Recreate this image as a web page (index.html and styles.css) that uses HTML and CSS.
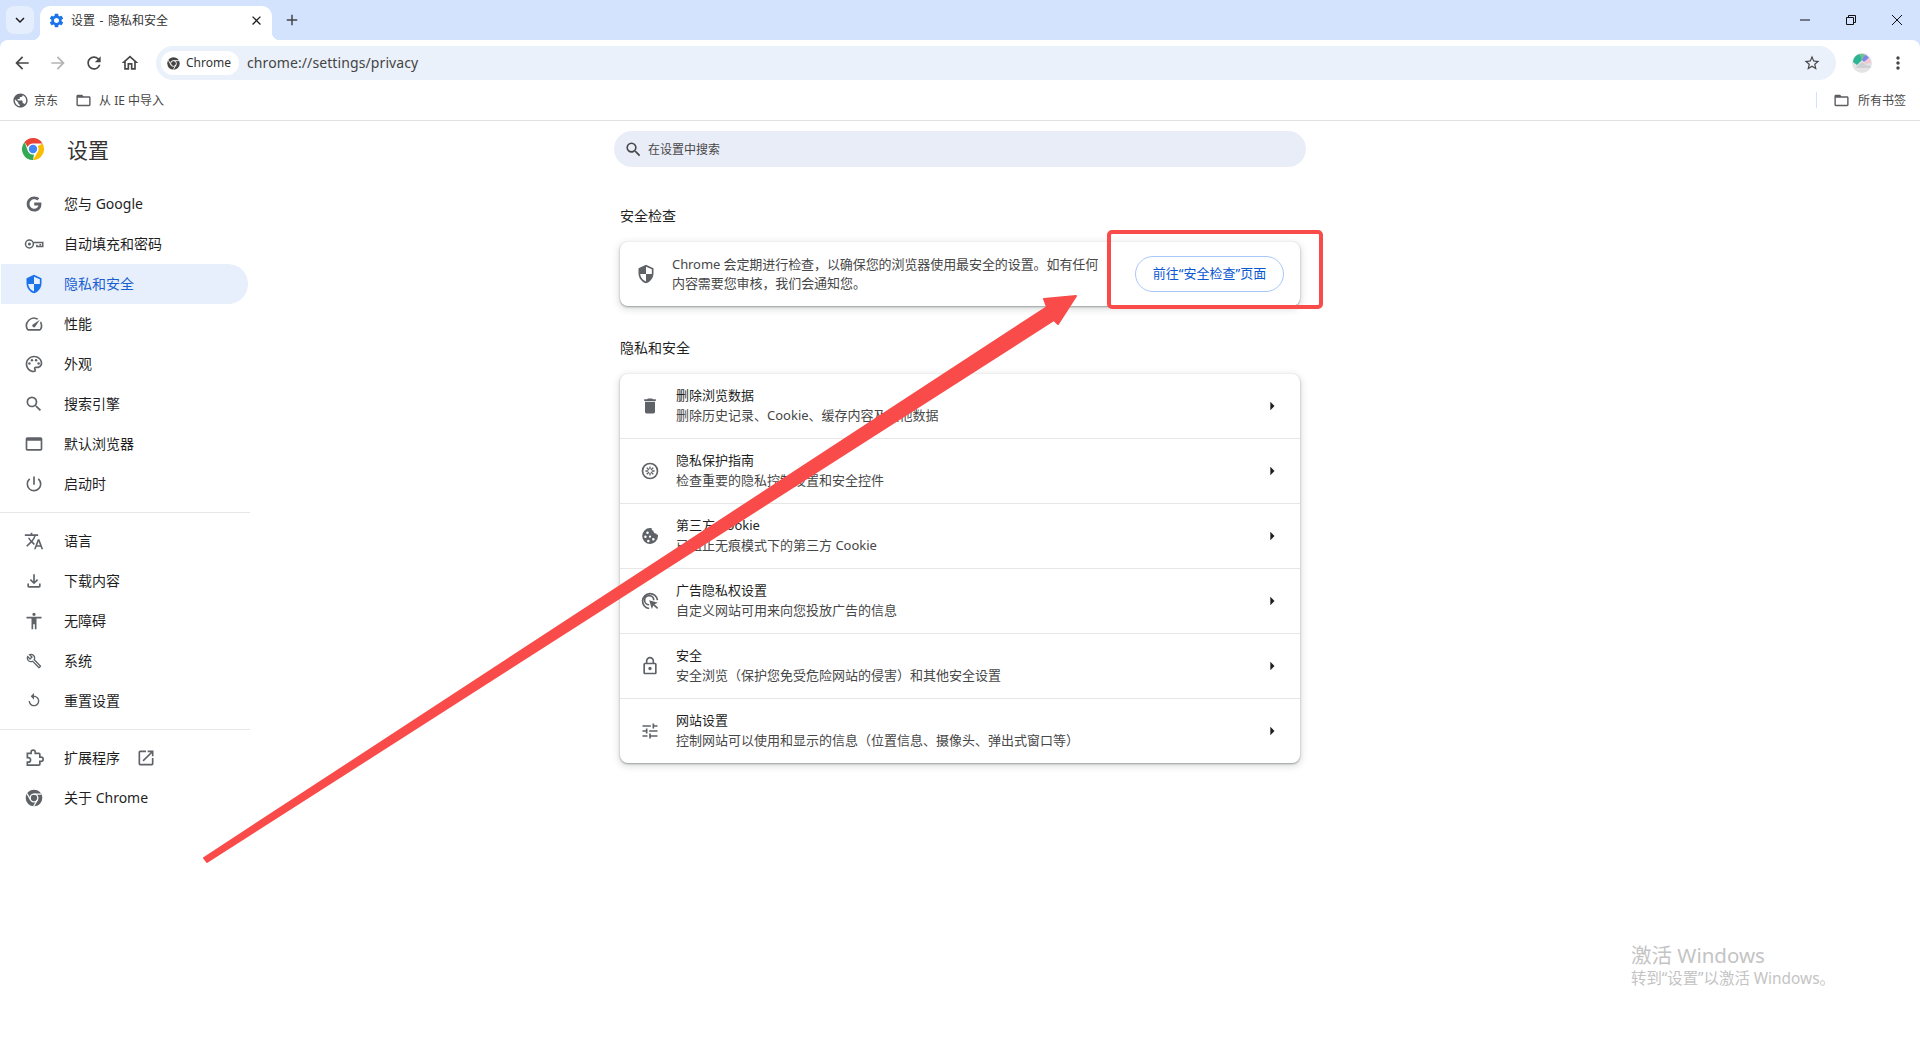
FILE: index.html
```html
<!DOCTYPE html>
<html lang="zh-CN">
<head>
  <meta charset="UTF-8" />
  <title>设置 - 隐私和安全</title>
  <link rel="stylesheet" href="styles.css">
</head>
<body>
  <div class="browser-top">
    <div class="tab-strip">
      <button class="tab-search">
        <svg class="icon-sm" viewBox="0 0 24 24"><path d="M7.4 8.6 12 13.2l4.6-4.6L18 10l-6 6-6-6z"/></svg>
      </button>
      <div class="tab">
        <svg class="tab-icon" viewBox="0 0 24 24"><path d="M19.14 12.94c.04-.3.06-.61.06-.94 0-.32-.02-.64-.07-.94l2.03-1.58c.18-.14.23-.41.12-.61l-1.92-3.32c-.12-.22-.37-.29-.59-.22l-2.39.96c-.5-.38-1.03-.7-1.62-.94l-.36-2.54c-.04-.24-.24-.41-.48-.41h-3.84c-.24 0-.43.17-.47.41l-.36 2.54c-.59.24-1.13.57-1.62.94l-2.39-.96c-.22-.08-.47 0-.59.22L2.74 8.87c-.12.21-.08.47.12.61l2.03 1.58c-.05.3-.09.63-.09.94s.02.64.07.94l-2.03 1.58c-.18.14-.23.41-.12.61l1.92 3.32c.12.22.37.29.59.22l2.39-.96c.5.38 1.03.7 1.62.94l.36 2.54c.05.24.24.41.48.41h3.84c.24 0 .44-.17.47-.41l.36-2.54c.59-.24 1.13-.56 1.62-.94l2.39.96c.22.08.47 0 .59-.22l1.92-3.32c.12-.22.07-.47-.12-.61l-2.01-1.58zM12 15.6c-1.98 0-3.6-1.62-3.6-3.6s1.62-3.6 3.6-3.6 3.6 1.62 3.6 3.6-1.62 3.6-3.6 3.6z"/></svg>
        <span class="tab-title">设置 - 隐私和安全</span>
        <svg class="tab-close" viewBox="0 0 24 24"><path d="M19 6.41 17.59 5 12 10.59 6.41 5 5 6.41 10.59 12 5 17.59 6.41 19 12 13.41 17.59 19 19 17.59 13.41 12z"/></svg>
      </div>
      <svg class="new-tab" viewBox="0 0 24 24"><path d="M19 13h-6v6h-2v-6H5v-2h6V5h2v6h6z"/></svg>
      <div class="window-controls">
        <svg viewBox="0 0 12 12"><path d="M1 6h10"/></svg>
        <svg viewBox="0 0 12 12"><path d="M1.5 3.5h7v7h-7zM3.5 3.5v-2h7v7h-2"/></svg>
        <svg viewBox="0 0 12 12"><path d="M1 1l10 10M11 1 1 11"/></svg>
      </div>
    </div>

    <div class="toolbar">
      <svg class="tool-icon" viewBox="0 0 24 24"><path d="M20 11H7.83l5.59-5.59L12 4l-8 8 8 8 1.41-1.41L7.83 13H20v-2z"/></svg>
      <svg class="tool-icon disabled" viewBox="0 0 24 24"><path d="M12 4l-1.41 1.41L16.17 11H4v2h12.17l-5.58 5.59L12 20l8-8z"/></svg>
      <svg class="tool-icon" viewBox="0 0 24 24"><path d="M17.65 6.35A7.958 7.958 0 0 0 12 4c-4.42 0-7.99 3.58-7.99 8s3.57 8 7.99 8c3.73 0 6.84-2.55 7.73-6h-2.08A5.99 5.99 0 0 1 12 18c-3.31 0-6-2.69-6-6s2.69-6 6-6c1.66 0 3.14.69 4.22 1.78L13 11h7V4l-2.35 2.35z"/></svg>
      <svg class="tool-icon" viewBox="0 0 24 24"><path d="M12 5.69l5 4.5V18h-2v-6H9v6H7v-7.81l5-4.5M12 3L2 12h3v8h6v-6h2v6h6v-8h3L12 3z"/></svg>
      <div class="omnibox">
        <div class="chip">
          <svg class="chrome-mono" viewBox="0 0 24 24"><circle cx="12" cy="12" r="10"/><circle class="hole" cx="12" cy="12" r="4.6"/><path class="cut" d="M12 7.4h9M8 14.3 3.6 6.7M16 14.3l-4.4 7.6"/></svg>
          <span>Chrome</span>
        </div>
        <span class="url">chrome://settings/privacy</span>
        <svg class="star" viewBox="0 0 24 24"><path d="M22 9.24l-7.19-.62L12 2 9.19 8.63 2 9.24l5.46 4.73L5.82 21 12 17.27 18.18 21l-1.63-7.03L22 9.24zM12 15.4l-3.76 2.27 1-4.28-3.32-2.88 4.38-.38L12 6.1l1.71 4.04 4.38.38-3.32 2.88 1 4.28L12 15.4z"/></svg>
      </div>
      <svg class="avatar" viewBox="0 0 20 20">
        <circle cx="10" cy="10" r="10" fill="#e4e4e4"/>
        <path d="M1 9A9 9 0 0 1 8 1l2 6-5 5z" fill="#2bb594"/>
        <path d="M8 1a9 9 0 0 1 5 .6L10 8z" fill="#72c08e"/>
        <path d="M13 1.5A9 9 0 0 1 17 5l-5 4-2-2z" fill="#7a86e8"/>
        <path d="M17 5a9 9 0 0 1 2 5l-6 1-1-2z" fill="#f0c7d2"/>
        <path d="M4 14l6-5 4 3 5 1a9 9 0 0 1-1 2H5z" fill="#cfd0d6"/>
      </svg>
      <svg class="tool-icon menu" viewBox="0 0 24 24"><path d="M12 8c1.1 0 2-.9 2-2s-.9-2-2-2-2 .9-2 2 .9 2 2 2zm0 2c-1.1 0-2 .9-2 2s.9 2 2 2 2-.9 2-2-.9-2-2-2zm0 6c-1.1 0-2 .9-2 2s.9 2 2 2 2-.9 2-2-.9-2-2-2z"/></svg>
    </div>
  </div>

  <div class="bookmarks">
    <div class="bookmark site">
      <svg viewBox="0 0 24 24"><path d="M12 2C6.48 2 2 6.48 2 12s4.48 10 10 10 10-4.48 10-10S17.52 2 12 2zm-1 17.93c-3.95-.49-7-3.85-7-7.93 0-.62.08-1.21.21-1.79L9 15v1c0 1.1.9 2 2 2v1.93zm6.9-2.54c-.26-.81-1-1.39-1.9-1.39h-1v-3c0-.55-.45-1-1-1H8v-2h2c.55 0 1-.45 1-1V7h2c1.1 0 2-.9 2-2v-.41c2.93 1.19 5 4.06 5 7.41 0 2.08-.8 3.97-2.1 5.39z"/></svg>
      <span>京东</span>
    </div>
    <div class="bookmark">
      <svg viewBox="0 0 24 24"><path d="M20 6h-8l-2-2H4c-1.1 0-1.99.9-1.99 2L2 18c0 1.1.9 2 2 2h16c1.1 0 2-.9 2-2V8c0-1.1-.9-2-2-2zm0 12H4V8h16v10z"/></svg>
      <span>从 IE 中导入</span>
    </div>
    <div class="bookmarks-end">
      <div class="bookmark-sep"></div>
      <div class="bookmark">
        <svg viewBox="0 0 24 24"><path d="M20 6h-8l-2-2H4c-1.1 0-1.99.9-1.99 2L2 18c0 1.1.9 2 2 2h16c1.1 0 2-.9 2-2V8c0-1.1-.9-2-2-2zm0 12H4V8h16v10z"/></svg>
        <span>所有书签</span>
      </div>
    </div>
  </div>

  <div class="settings">
    <aside class="sidebar">
      <div class="brand">
        <svg class="brand-logo" viewBox="0 0 24 24">
          <path d="M12 1a11 11 0 0 1 9.53 5.5H12a5.5 5.5 0 0 0-5.2 3.7L3.6 4.9A11 11 0 0 1 12 1z" fill="#ea4335"/>
          <path d="M21.53 6.5A11 11 0 0 1 12 23l4.76-8.25A5.5 5.5 0 0 0 16.76 9.25z" fill="#fbbc04"/>
          <path d="M12 23A11 11 0 0 1 3.6 4.9L7.2 14.75a5.5 5.5 0 0 0 5.8 2.7z" fill="#34a853"/>
          <circle cx="12" cy="12" r="5.2" fill="#fff"/>
          <circle cx="12" cy="12" r="4.2" fill="#4285f4"/>
        </svg>
        <span class="brand-name">设置</span>
      </div>

      <nav class="nav-group">
        <a class="nav-item"><svg class="nav-icon" viewBox="0 0 24 24"><path d="M12.24 10.29v3.6h5.1c-.45 2.2-2.35 3.8-5.1 3.8-3.07 0-5.57-2.54-5.57-5.69s2.5-5.69 5.57-5.69c1.55 0 2.75.6 3.59 1.39l2.6-2.6C16.7 3.87 14.67 3 12.24 3 7.27 3 3.24 7.03 3.24 12s4.03 9 9 9c5.2 0 8.64-3.65 8.64-8.8 0-.59-.06-1.34-.14-1.91z"/></svg>您与 Google</a>
        <a class="nav-item"><svg class="nav-icon" viewBox="0 0 24 24"><circle class="key" cx="6.500" cy="12" r="4.700"/><circle cx="6.500" cy="12" r="1.800"/><path class="key" d="M11.200 10.200h11.300v4.800h-7v-2"/><path d="M18.500 12h2v2h-2z"/></svg>自动填充和密码</a>
        <a class="nav-item active"><svg class="nav-icon" viewBox="0 0 24 24"><path transform="matrix(-1 0 0 1 24 0)" d="M12 1L3 5v6c0 5.550 3.840 10.740 9 12 5.160-1.260 9-6.450 9-12V5l-9-4zm0 10.990h7c-.53 4.120-3.280 7.790-7 8.940V12H5V6.300l7-3.110v8.800z"/></svg>隐私和安全</a>
        <a class="nav-item"><svg class="nav-icon" viewBox="0 0 24 24"><path d="M20.380 8.570l-1.230 1.850a8 8 0 0 1-.220 7.580H5.070A8 8 0 0 1 15.580 6.850l1.850-1.230A10 10 0 0 0 3.350 19a2 2 0 0 0 1.720 1h13.850a2 2 0 0 0 1.740-1 10 10 0 0 0-.270-10.440zm-9.790 6.840a2 2 0 0 0 2.830 0l5.660-8.490-8.490 5.660a2 2 0 0 0 0 2.830z"/></svg>性能</a>
        <a class="nav-item"><svg class="nav-icon" viewBox="0 0 24 24"><path d="M12 22C6.490 22 2 17.510 2 12S6.490 2 12 2s10 4.040 10 9c0 3.310-2.690 6-6 6h-1.770c-.28 0-.5.220-.5.5 0 .12.050.23.130.33.410.47.640 1.060.640 1.670A2.500 2.500 0 0 1 12 22zm0-18c-4.410 0-8 3.590-8 8s3.590 8 8 8c.28 0 .5-.22.5-.5a.54.54 0 0 0-.14-.35c-.41-.46-.63-1.050-.63-1.650a2.500 2.500 0 0 1 2.500-2.500H16c2.210 0 4-1.790 4-4 0-3.860-3.590-7-8-7z"/><circle cx="6.500" cy="11.500" r="1.500"/><circle cx="9.500" cy="7.500" r="1.500"/><circle cx="14.500" cy="7.500" r="1.500"/><circle cx="17.500" cy="11.500" r="1.500"/></svg>外观</a>
        <a class="nav-item"><svg class="nav-icon" viewBox="0 0 24 24"><path d="M15.500 14h-.79l-.28-.27A6.471 6.471 0 0 0 16 9.500 6.500 6.500 0 1 0 9.500 16c1.610 0 3.090-.59 4.230-1.570l.27.28v.79l5 4.990L20.490 19l-4.990-5zm-6 0C7.010 14 5 11.990 5 9.500S7.010 5 9.500 5 14 7.010 14 9.500 11.990 14 9.500 14z"/></svg>搜索引擎</a>
        <a class="nav-item"><svg class="nav-icon" viewBox="0 0 24 24"><path d="M20 4H4c-1.100 0-2 .9-2 2v12c0 1.100.9 2 2 2h16c1.100 0 2-.9 2-2V6c0-1.100-.9-2-2-2zm0 14H4V8h16v10z"/></svg>默认浏览器</a>
        <a class="nav-item"><svg class="nav-icon" viewBox="0 0 24 24"><path d="M13 3h-2v10h2V3zm4.830 2.170l-1.420 1.420A6.920 6.920 0 0 1 19 12c0 3.870-3.130 7-7 7A6.995 6.995 0 0 1 7.580 6.580L6.170 5.170A8.932 8.932 0 0 0 3 12a9 9 0 0 0 18 0c0-2.740-1.230-5.180-3.170-6.830z"/></svg>启动时</a>
      </nav>

      <nav class="nav-group">
        <a class="nav-item"><svg class="nav-icon" viewBox="0 0 24 24"><path d="M12.870 15.070l-2.540-2.510.03-.03A17.520 17.520 0 0 0 14.070 6H17V4h-7V2H8v2H1v1.990h11.170C11.500 7.920 10.440 9.750 9 11.350 8.070 10.320 7.300 9.190 6.690 8h-2c.73 1.630 1.730 3.170 2.980 4.560l-5.090 5.020L4 19l5-5 3.110 3.110.76-2.040zM18.500 10h-2L12 22h2l1.120-3h4.750L21 22h2l-4.500-12zm-2.620 7l1.620-4.330L19.120 17h-3.240z"/></svg>语言</a>
        <a class="nav-item"><svg class="nav-icon" viewBox="0 0 24 24"><path d="M18 15v3H6v-3H4v3c0 1.100.9 2 2 2h12c1.100 0 2-.9 2-2v-3h-2zm-1-4l-1.410-1.410L13 12.170V4h-2v8.170L8.410 9.590 7 11l5 5 5-5z"/></svg>下载内容</a>
        <a class="nav-item"><svg class="nav-icon" viewBox="0 0 24 24"><path d="M12 2a2 2 0 1 1 0 4 2 2 0 0 1 0-4zm9 7h-6v13h-2v-6h-2v6H9V9H3V7h18v2z"/></svg>无障碍</a>
        <a class="nav-item"><svg class="nav-icon" viewBox="0 0 24 24"><path transform="translate(2.400 2.400) scale(.8)" d="M22.610 18.990l-9.080-9.080c.93-2.340.45-5.100-1.440-7C9.790.61 6.210.4 3.660 2.260L7.500 6.110 6.080 7.520 2.250 3.690C.39 6.230.6 9.820 2.900 12.110c1.860 1.860 4.570 2.350 6.880 1.480l9.110 9.110c.39.39 1.020.39 1.410 0l2.300-2.300c.4-.38.4-1.010.01-1.410zm-3 1.600l-9.460-9.460c-.61.45-1.290.72-2 .82-1.360.2-2.790-.21-3.830-1.250C3.370 9.760 2.930 8.500 3 7.260l3.090 3.090 4.240-4.240-3.090-3.090c1.240-.07 2.490.37 3.440 1.310a4.469 4.469 0 0 1 1.240 3.960 4.350 4.350 0 0 1-.88 1.960l9.450 9.450-.88.88z"/></svg>系统</a>
        <a class="nav-item"><svg class="nav-icon" viewBox="0 0 24 24"><path transform="translate(2.400 1.600) scale(.8)" d="M12 5V1L7 6l5 5V7c3.310 0 6 2.690 6 6s-2.690 6-6 6-6-2.690-6-6H4c0 4.420 3.580 8 8 8s8-3.580 8-8-3.580-8-8-8z"/></svg>重置设置</a>
      </nav>

      <nav class="nav-group last">
        <a class="nav-item"><svg class="nav-icon" viewBox="0 0 24 24"><path class="outline" d="M4 6.500h4.500V5a2.500 2.500 0 0 1 5 0v1.500H18a1 1 0 0 1 1 1V11h1.500a2 2 0 0 1 0 5H19v3.500a1 1 0 0 1-1 1H4v-3.500h1.200a2.700 2.700 0 0 0 0-5.400H4z"/></svg>扩展程序<svg class="external" viewBox="0 0 24 24"><path d="M19 19H5V5h7V3H5a2 2 0 0 0-2 2v14a2 2 0 0 0 2 2h14c1.100 0 2-.9 2-2v-7h-2v7zM14 3v2h3.590l-9.830 9.830 1.410 1.410L19 6.410V10h2V3h-7z"/></svg></a>
        <a class="nav-item"><svg class="nav-icon chrome-mono" viewBox="0 0 24 24"><circle cx="12" cy="12" r="10"/><circle class="hole" cx="12" cy="12" r="4.600"/><path class="cut" d="M12 7.400h9M8 14.300 3.600 6.700M16 14.300l-4.400 7.600"/></svg>关于 Chrome</a>
      </nav>
    </aside>

    <main class="content">
      <div class="search-box">
        <svg viewBox="0 0 24 24"><path d="M15.500 14h-.79l-.28-.27A6.471 6.471 0 0 0 16 9.500 6.500 6.500 0 1 0 9.500 16c1.610 0 3.090-.59 4.230-1.570l.27.28v.79l5 4.990L20.490 19l-4.990-5zm-6 0C7.010 14 5 11.990 5 9.500S7.010 5 9.500 5 14 7.010 14 9.500 11.990 14 9.500 14z"/></svg>
        <span>在设置中搜索</span>
      </div>

      <h2 class="section-title">安全检查</h2>
      <section class="card safety-card">
        <svg class="row-icon" viewBox="0 0 24 24"><path transform="matrix(-1 0 0 1 24 0)" d="M12 1L3 5v6c0 5.550 3.840 10.740 9 12 5.160-1.260 9-6.450 9-12V5l-9-4zm0 10.990h7c-.53 4.120-3.280 7.790-7 8.940V12H5V6.300l7-3.110v8.800z"/></svg>
        <p class="safety-text">Chrome 会定期进行检查，以确保您的浏览器使用最安全的设置。如有任何内容需要您审核，我们会通知您。</p>
        <button class="safety-btn">前往“安全检查”页面</button>
      </section>

      <h2 class="section-title second">隐私和安全</h2>
      <section class="card">
        <div class="row">
          <svg class="row-icon" viewBox="0 0 24 24"><path d="M6 19c0 1.100.9 2 2 2h8c1.100 0 2-.9 2-2V7H6v12zM19 4h-3.500l-1-1h-5l-1 1H5v2h14V4z"/></svg>
          <div class="row-text"><div class="row-title">删除浏览数据</div><div class="row-sub">删除历史记录、Cookie、缓存内容及其他数据</div></div>
          <svg class="row-arrow" viewBox="0 0 24 24"><path d="M10 7l5 5-5 5z"/></svg>
        </div>
        <div class="row">
          <svg class="row-icon" viewBox="0 0 24 24"><path d="M12 2a10 10 0 1 0 0 20 10 10 0 0 0 0-20zm0 2a8 8 0 1 1 0 16 8 8 0 0 1 0-16z"/><path class="spokes" d="M12 6.500v3.500M12 14v3.500M6.500 12H10M14 12h3.500M8.100 8.100l2.500 2.500M13.400 13.400l2.500 2.500M15.900 8.100l-2.500 2.500M10.600 13.400l-2.500 2.500"/></svg>
          <div class="row-text"><div class="row-title">隐私保护指南</div><div class="row-sub">检查重要的隐私控制设置和安全控件</div></div>
          <svg class="row-arrow" viewBox="0 0 24 24"><path d="M10 7l5 5-5 5z"/></svg>
        </div>
        <div class="row">
          <svg class="row-icon" viewBox="0 0 24 24"><path fill-rule="evenodd" d="M12 2.500c.9 0 1.500.1 2 .2-.2 1.500.7 2.800 2.100 3.100-.2 1.800 1.300 3.400 3.200 3.100.3 1 1.200 1.600 2.200 1.700.1.500.1.900.1 1.400A9.500 9.500 0 1 1 12 2.500zM9 6.500a1.500 1.500 0 1 0 0 3 1.500 1.500 0 0 0 0-3zm-2.500 5a1.500 1.500 0 1 0 0 3 1.500 1.500 0 0 0 0-3zm5.500 0a1.300 1.300 0 1 0 0 2.600 1.300 1.300 0 0 0 0-2.600zm4 3a1.500 1.500 0 1 0 0 3 1.500 1.500 0 0 0 0-3zm-6 2a1.500 1.500 0 1 0 0 3 1.500 1.500 0 0 0 0-3z"/></svg>
          <div class="row-text"><div class="row-title">第三方 Cookie</div><div class="row-sub">已阻止无痕模式下的第三方 Cookie</div></div>
          <svg class="row-arrow" viewBox="0 0 24 24"><path d="M10 7l5 5-5 5z"/></svg>
        </div>
        <div class="row">
          <svg class="row-icon" viewBox="0 0 24 24"><path class="outline" d="M11 21a9 9 0 1 1 10-10M11 16.500A5.500 5.500 0 1 1 16.500 11"/><path d="M11 11l3.200 10.500 1.800-4.200 4.500 4.200 1.300-1.300-4.400-4.400 4.100-1.600z"/></svg>
          <div class="row-text"><div class="row-title">广告隐私权设置</div><div class="row-sub">自定义网站可用来向您投放广告的信息</div></div>
          <svg class="row-arrow" viewBox="0 0 24 24"><path d="M10 7l5 5-5 5z"/></svg>
        </div>
        <div class="row">
          <svg class="row-icon" viewBox="0 0 24 24"><path d="M18 8h-1V6c0-2.760-2.240-5-5-5S7 3.240 7 6v2H6c-1.100 0-2 .9-2 2v10c0 1.100.9 2 2 2h12c1.100 0 2-.9 2-2V10c0-1.100-.9-2-2-2zM9 6c0-1.660 1.340-3 3-3s3 1.340 3 3v2H9V6zm9 14H6V10h12v10zm-6-3c1.100 0 2-.9 2-2s-.9-2-2-2-2 .9-2 2 .9 2 2 2z"/></svg>
          <div class="row-text"><div class="row-title">安全</div><div class="row-sub">安全浏览（保护您免受危险网站的侵害）和其他安全设置</div></div>
          <svg class="row-arrow" viewBox="0 0 24 24"><path d="M10 7l5 5-5 5z"/></svg>
        </div>
        <div class="row">
          <svg class="row-icon" viewBox="0 0 24 24"><path d="M3 17v2h6v-2H3zM3 5v2h10V5H3zm10 16v-2h8v-2h-8v-2h-2v6h2zM7 9v2H3v2h4v2h2V9H7zm14 4v-2H11v2h10zm-6-4h2V7h4V5h-4V3h-2v6z"/></svg>
          <div class="row-text"><div class="row-title">网站设置</div><div class="row-sub">控制网站可以使用和显示的信息（位置信息、摄像头、弹出式窗口等）</div></div>
          <svg class="row-arrow" viewBox="0 0 24 24"><path d="M10 7l5 5-5 5z"/></svg>
        </div>
      </section>
    </main>
  </div>

  <!-- annotations drawn on top of the screenshot -->
  <div class="callout-box"></div>
  <svg class="callout-arrow" viewBox="0 0 1920 1040">
    <path d="M204 858 1047 307 1044 299 1076 296 1058 324 1054 320 207 862z"/>
  </svg>

  <div class="watermark">
    <div class="watermark-title">激活 Windows</div>
    <div class="watermark-sub">转到“设置”以激活 Windows。</div>
  </div>
</body>
</html>
```

FILE: styles.css
```css
:root {
  --strip-bg: #d3e3fd;
  --field-bg: #ebf1fa;
  --text: #1f1f1f;
  --text-soft: #474747;
  --icon: #5f6368;
  --blue: #0b57d0;
  --red: #f94c4a;
  --line: #e6e6e6;
}

* {
  box-sizing: border-box;
}

html,
body {
  margin: 0;
  height: 100%;
  overflow: hidden;
}

body {
  position: relative;
  background: #fff;
  color: var(--text);
  font-family: "Noto Sans", "Noto Sans CJK SC", sans-serif;
  font-size: 13px;
}

svg {
  display: block;
  flex: none;
  fill: var(--icon);
}

/* tab strip */
.browser-top {
  background: var(--strip-bg);
}

.tab-strip {
  display: flex;
  align-items: flex-end;
  height: 40px;
  padding-left: 6px;
}

.tab-search {
  display: flex;
  align-items: center;
  justify-content: center;
  width: 28px;
  height: 28px;
  margin-bottom: 6px;
  padding: 0;
  border: none;
  border-radius: 8px;
  background: #e5eefd;
}

.icon-sm {
  width: 18px;
  height: 18px;
  fill: #1f1f1f;
}

.tab {
  position: relative;
  display: flex;
  align-items: center;
  width: 232px;
  height: 34px;
  margin-left: 6px;
  padding: 0 8px 6px 8px;
  border-radius: 10px 10px 0 0;
  background: #fff;
}

.tab::before,
.tab::after {
  content: "";
  position: absolute;
  bottom: 0;
  width: 8px;
  height: 8px;
}

.tab::before {
  left: -8px;
  background: radial-gradient(circle at 0 0, var(--strip-bg) 8px, #fff 8.5px);
}

.tab::after {
  right: -8px;
  background: radial-gradient(circle at 100% 0, var(--strip-bg) 8px, #fff 8.5px);
}

.tab-icon {
  width: 17px;
  height: 17px;
  fill: #1a73e8;
}

.tab-title {
  flex: 1;
  margin-left: 6px;
  font-size: 12px;
  word-spacing: 1.5px;
  color: #333;
}

.tab-close {
  width: 15px;
  height: 15px;
  fill: #1f1f1f;
}

.new-tab {
  width: 18px;
  height: 18px;
  margin: 0 0 11px 11px;
  fill: #444;
}

.window-controls {
  display: flex;
  gap: 34px;
  margin: 0 17px 14px auto;
}

.window-controls svg {
  width: 12px;
  height: 12px;
  fill: none;
  stroke: #111;
  stroke-width: 1;
}

/* toolbar */
.toolbar {
  display: flex;
  align-items: center;
  height: 46px;
  padding: 0 12px;
  border-radius: 8px 8px 0 0;
  background: #fff;
}

.tool-icon {
  width: 20px;
  height: 20px;
  margin-right: 16px;
  fill: #474747;
}

.tool-icon.disabled {
  fill: #b4b4b4;
}

.tool-icon.menu {
  margin: 0 0 0 16px;
}

.omnibox {
  display: flex;
  align-items: center;
  flex: 1;
  height: 34px;
  margin-left: 0;
  padding: 0 15px 0 5px;
  border-radius: 17px;
  background: var(--field-bg);
}

.chip {
  display: flex;
  align-items: center;
  gap: 5px;
  width: 78px;
  height: 24px;
  padding: 0 0 2px 5px;
  border-radius: 12px;
  background: #fff;
  font-size: 12px;
  color: #333;
}

.chip .chrome-mono {
  width: 15px;
  height: 15px;
  margin-top: 2px;
  fill: #444;
}

.chrome-mono .hole {
  fill: none;
  stroke: #fff;
  stroke-width: 1.6;
}

.chrome-mono .cut {
  fill: none;
  stroke: #fff;
  stroke-width: 1.4;
}

.url {
  flex: 1;
  margin: 0 0 2px 8px;
  font-size: 14px;
  letter-spacing: 0.1px;
  color: #444;
}

.star {
  width: 18px;
  height: 18px;
  fill: #474747;
}

.avatar {
  width: 20px;
  height: 20px;
  margin-left: 16px;
}

/* bookmarks bar */
.bookmarks {
  display: flex;
  align-items: center;
  gap: 17px;
  height: 35px;
  padding: 0 14px 6px 12px;
  border-bottom: 1px solid #e1e1e1;
}

.bookmark {
  display: flex;
  align-items: center;
  gap: 7px;
  font-size: 12px;
  color: #474747;
}

.bookmark.site {
  gap: 5px;
}

.bookmark svg {
  width: 17px;
  height: 17px;
  fill: #5b5e62;
}

.bookmarks-end {
  display: flex;
  align-items: center;
  gap: 16px;
  margin-left: auto;
}

.bookmarks-end .bookmark {
  gap: 8px;
}

.bookmark-sep {
  width: 1px;
  height: 16px;
  background: var(--strip-bg);
}

/* settings page */
.settings {
  display: grid;
  grid-template-columns: 250px 1fr 250px;
}

.brand {
  display: flex;
  align-items: center;
  height: 63px;
  padding: 0 0 8px 21px;
}

.brand-logo {
  width: 24px;
  height: 24px;
}

.brand-name {
  margin-left: 22px;
  font-size: 21px;
  color: #333;
}

.nav-group {
  padding-bottom: 8px;
  border-bottom: 1px solid var(--line);
  margin-bottom: 8px;
}

.nav-group.last {
  border-bottom: none;
}

.nav-item {
  display: flex;
  align-items: center;
  width: 248px;
  height: 40px;
  padding: 0 0 2px 24px;
  border-radius: 0 20px 20px 0;
  font-size: 14px;
  color: var(--text);
}

.nav-item.active {
  margin-left: 1px;
  width: 247px;
  padding-left: 23px;
  background: #e7effc;
  color: #1a5fd0;
}

.nav-item.active .nav-icon {
  fill: #1a73e8;
}

.nav-icon {
  width: 20px;
  height: 20px;
  margin: 2px 20px 0 0;
}

.external {
  width: 20px;
  height: 20px;
  margin: 2px 0 0 16px;
}

.outline {
  fill: none;
  stroke: var(--icon);
  stroke-width: 2;
}

.key {
  fill: none;
  stroke: var(--icon);
  stroke-width: 1.8;
}

.spokes {
  fill: none;
  stroke: var(--icon);
  stroke-width: 1.6;
}

.content {
  display: flex;
  flex-direction: column;
  align-items: center;
  padding-top: 10px;
}

.search-box {
  display: flex;
  align-items: center;
  gap: 5px;
  width: 692px;
  height: 36px;
  padding-left: 10px;
  border-radius: 18px;
  background: #e9edf7;
  font-size: 12px;
  color: #474747;
}

.search-box svg {
  width: 19px;
  height: 19px;
  fill: #474747;
}

.section-title {
  width: 680px;
  margin: 39px 0 16px;
  font-size: 14px;
  font-weight: 400;
  line-height: 20px;
  color: var(--text);
}

.section-title.second {
  margin: 32px 0 16px;
}

.card {
  width: 680px;
  border-radius: 8px;
  background: #fff;
  box-shadow: 0 1px 2px rgba(60, 64, 67, 0.45), 0 2px 6px 2px rgba(60, 64, 67, 0.15);
}

.safety-card {
  display: flex;
  align-items: center;
  height: 64px;
  padding: 0 16px;
}

.safety-text {
  width: 432px;
  margin: 0 0 1px 16px;
  line-height: 19px;
  letter-spacing: -0.08px;
  color: var(--text-soft);
}

.safety-btn {
  width: 149px;
  height: 36px;
  margin-left: auto;
  padding: 0 0 3px;
  border: 1px solid #a8c7fa;
  border-radius: 18px;
  background: #fff;
  font-family: inherit;
  font-size: 13px;
  color: var(--blue);
}

.row-icon {
  width: 20px;
  height: 20px;
}

.row {
  display: flex;
  align-items: center;
  height: 65px;
  padding: 0 18px 0 20px;
  border-top: 1px solid var(--line);
}

.row:first-child {
  height: 64px;
  border-top: none;
}

.row-text {
  flex: 1;
  margin: 0 0 2px 16px;
}

.row-title {
  line-height: 20px;
  color: var(--text);
}

.row-sub {
  line-height: 20px;
  color: var(--text-soft);
}

.row-arrow {
  width: 20px;
  height: 20px;
  fill: #1f1f1f;
}

/* annotations */
.callout-box {
  position: absolute;
  left: 1107px;
  top: 230px;
  width: 216px;
  height: 79px;
  border: 4px solid var(--red);
  border-radius: 5px;
}

.callout-arrow {
  position: absolute;
  left: 0;
  top: 0;
  width: 1920px;
  height: 1040px;
  fill: var(--red);
  stroke: var(--red);
  stroke-width: 2;
  stroke-linejoin: round;
  pointer-events: none;
}

.watermark {
  position: absolute;
  left: 1631px;
  top: 940px;
  color: #c4c4c4;
}

.watermark-title {
  font-size: 20.5px;
  line-height: 30px;
}

.watermark-sub {
  font-size: 15.4px;
  line-height: 18px;
}
```
